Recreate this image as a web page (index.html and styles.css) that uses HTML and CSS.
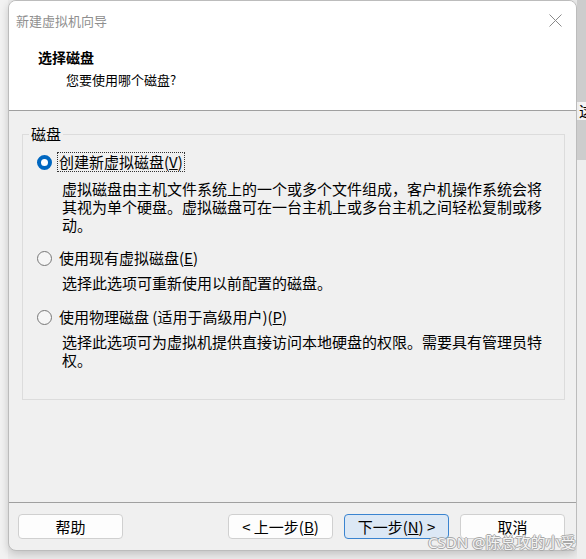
FILE: index.html
```html
<!DOCTYPE html>
<html lang="zh-CN">
<head>
<meta charset="utf-8">
<title>新建虚拟机向导</title>
<link rel="stylesheet" href="styles.css">
</head>
<body>
<div class="desk-left"></div>
<div class="window">
  <div class="top">
    <div class="titlebar">
      <span class="title">新建虚拟机向导</span>
      <svg class="close" width="13" height="13" viewBox="0 0 13 13"><path d="M0.5 0.5 L12.5 12.5 M12.5 0.5 L0.5 12.5" stroke="#8a8a8a" stroke-width="1" fill="none"/></svg>
    </div>
    <div class="header">
      <div class="h-title">选择磁盘</div>
      <div class="h-sub">您要使用哪个磁盘?</div>
    </div>
  </div>
  <div class="content">
    <fieldset class="group">
      <legend>磁盘</legend>
      <div class="options">
        <div class="option">
          <span class="radio checked"></span>
          <span class="label focused">创建新虚拟磁盘(<u>V</u>)</span>
        </div>
        <div class="desc first">虚拟磁盘由主机文件系统上的一个或多个文件组成，客户机操作系统会将其视为单个硬盘。虚拟磁盘可在一台主机上或多台主机之间轻松复制或移动。</div>
        <div class="option gap14">
          <span class="radio"></span>
          <span class="label">使用现有虚拟磁盘(<u>E</u>)</span>
        </div>
        <div class="desc">选择此选项可重新使用以前配置的磁盘。</div>
        <div class="option gap15">
          <span class="radio"></span>
          <span class="label">使用物理磁盘 (适用于高级用户)(<u>P</u>)</span>
        </div>
        <div class="desc">选择此选项可为虚拟机提供直接访问本地硬盘的权限。需要具有管理员特权。</div>
      </div>
    </fieldset>
  </div>
  <div class="footer">
    <button class="btn">帮助</button>
    <div class="spacer"></div>
    <button class="btn">&lt; 上一步(<u>B</u>)</button>
    <button class="btn default">下一步(<u>N</u>) &gt;</button>
    <button class="btn">取消</button>
  </div>
</div>
<div class="desk-right">
  <div class="dr-top"></div>
  <div class="dr-glyph">这</div>
  <div class="dr-bar"></div>
</div>
<div class="watermark">CSDN @陈总攻的小受</div>
</body>
</html>
```
FILE: styles.css
```css
* { box-sizing: border-box; }
html, body { margin: 0; padding: 0; }
body {
  width: 586px;
  height: 559px;
  overflow: hidden;
  background: #ececec;
  font-family: "Noto Sans CJK SC", "Noto Sans", sans-serif;
  display: flex;
  align-items: flex-start;
  position: relative;
  color: #000;
}
.desk-left { width: 8px; height: 559px; background: #f2f2f2; flex: none; }
.window {
  flex: none;
  width: 569px;
  height: 551px;
  border: 1px solid #bcbcbc;
  border-radius: 8px;
  background: #f0f0f0;
  display: flex;
  flex-direction: column;
  overflow: hidden;
  box-shadow: 0 3px 8px rgba(0, 0, 0, 0.18);
}
.top {
  height: 110px;
  background: #fff;
  border-bottom: 1px solid #a0a0a0;
}
.titlebar {
  height: 39px;
  display: flex;
  align-items: center;
  padding-left: 7px;
}
.title { font-size: 13px; color: #8f8f8f; line-height: 18px; }
.close { margin-left: auto; margin-right: 14px; }
.header { padding: 8px 0 0 29px; line-height: 18px; }
.h-title { font-size: 14px; font-weight: bold; }
.h-sub { font-size: 13px; margin: 5px 0 0 28px; }

.content { flex: 1; padding: 14px 0 0 13px; }
.group {
  width: 543px;
  margin: 0;
  padding: 0 0 30px 0;
  border: 1px solid #dcdcdc;
}
.group legend {
  margin-left: 6px;
  padding: 0 2px;
  font-size: 15px;
  line-height: 18px;
}
.options { padding: 9px 0 0 14px; font-size: 15px; }
.option { display: flex; align-items: center; height: 20px; }
.option.gap14 { margin-top: 14px; }
.option.gap15 { margin-top: 15px; }
.radio {
  width: 15px;
  height: 15px;
  border-radius: 50%;
  border: 1px solid #777;
  background: #f6f6f6;
  margin-right: 5px;
  flex: none;
}
.radio.checked {
  border: 4px solid #0067c0;
  background: #fff;
}
.label {
  line-height: 18px;
  padding: 0 1px;
  border: 1px dotted transparent;
  white-space: nowrap;
}
.label.focused { border-color: #333; }
.desc {
  width: 510px;
  padding-left: 25px;
  margin-top: 6px;
  line-height: 18px;
}
.desc.first { margin-top: 8px; }

.footer {
  height: 48px;
  border-top: 1px solid #a0a0a0;
  display: flex;
  align-items: flex-start;
  gap: 11px;
  padding: 11px 11px 0 9px;
}
.spacer { flex: 1; }
.btn {
  width: 105px;
  height: 25px;
  margin: 0;
  padding: 0;
  border: 1px solid #d0d0d0;
  border-radius: 4px;
  background: #fdfdfd;
  font-family: "Noto Sans CJK SC", "Noto Sans", sans-serif;
  font-size: 15px;
  line-height: 21px;
  color: #000;
}
.btn.default {
  background: #dce8f5;
  border-color: #3a84d0;
}

.desk-right { flex: none; width: 9px; height: 559px; background: #eeeeee; display: flex; flex-direction: column; overflow: hidden; }
.dr-top { height: 102px; background: #cdcdcd; }
.dr-glyph { height: 18px; font-size: 15px; line-height: 18px; margin-left: 2px; white-space: nowrap; background: #f4f4f4; }
.dr-bar { height: 40px; background: #cdcdcd; }

.watermark {
  position: absolute;
  left: 428px;
  top: 532px;
  font-size: 15px;
  line-height: 20px;
  color: #f4f4f4;
  text-shadow: 1px 0 0 #a8a8a8, -1px 0 0 #a8a8a8, 0 1px 0 #a8a8a8, 0 -1px 0 #a8a8a8;
  white-space: nowrap;
  font-family: "Noto Sans", "Noto Sans CJK SC", sans-serif;
}
```
